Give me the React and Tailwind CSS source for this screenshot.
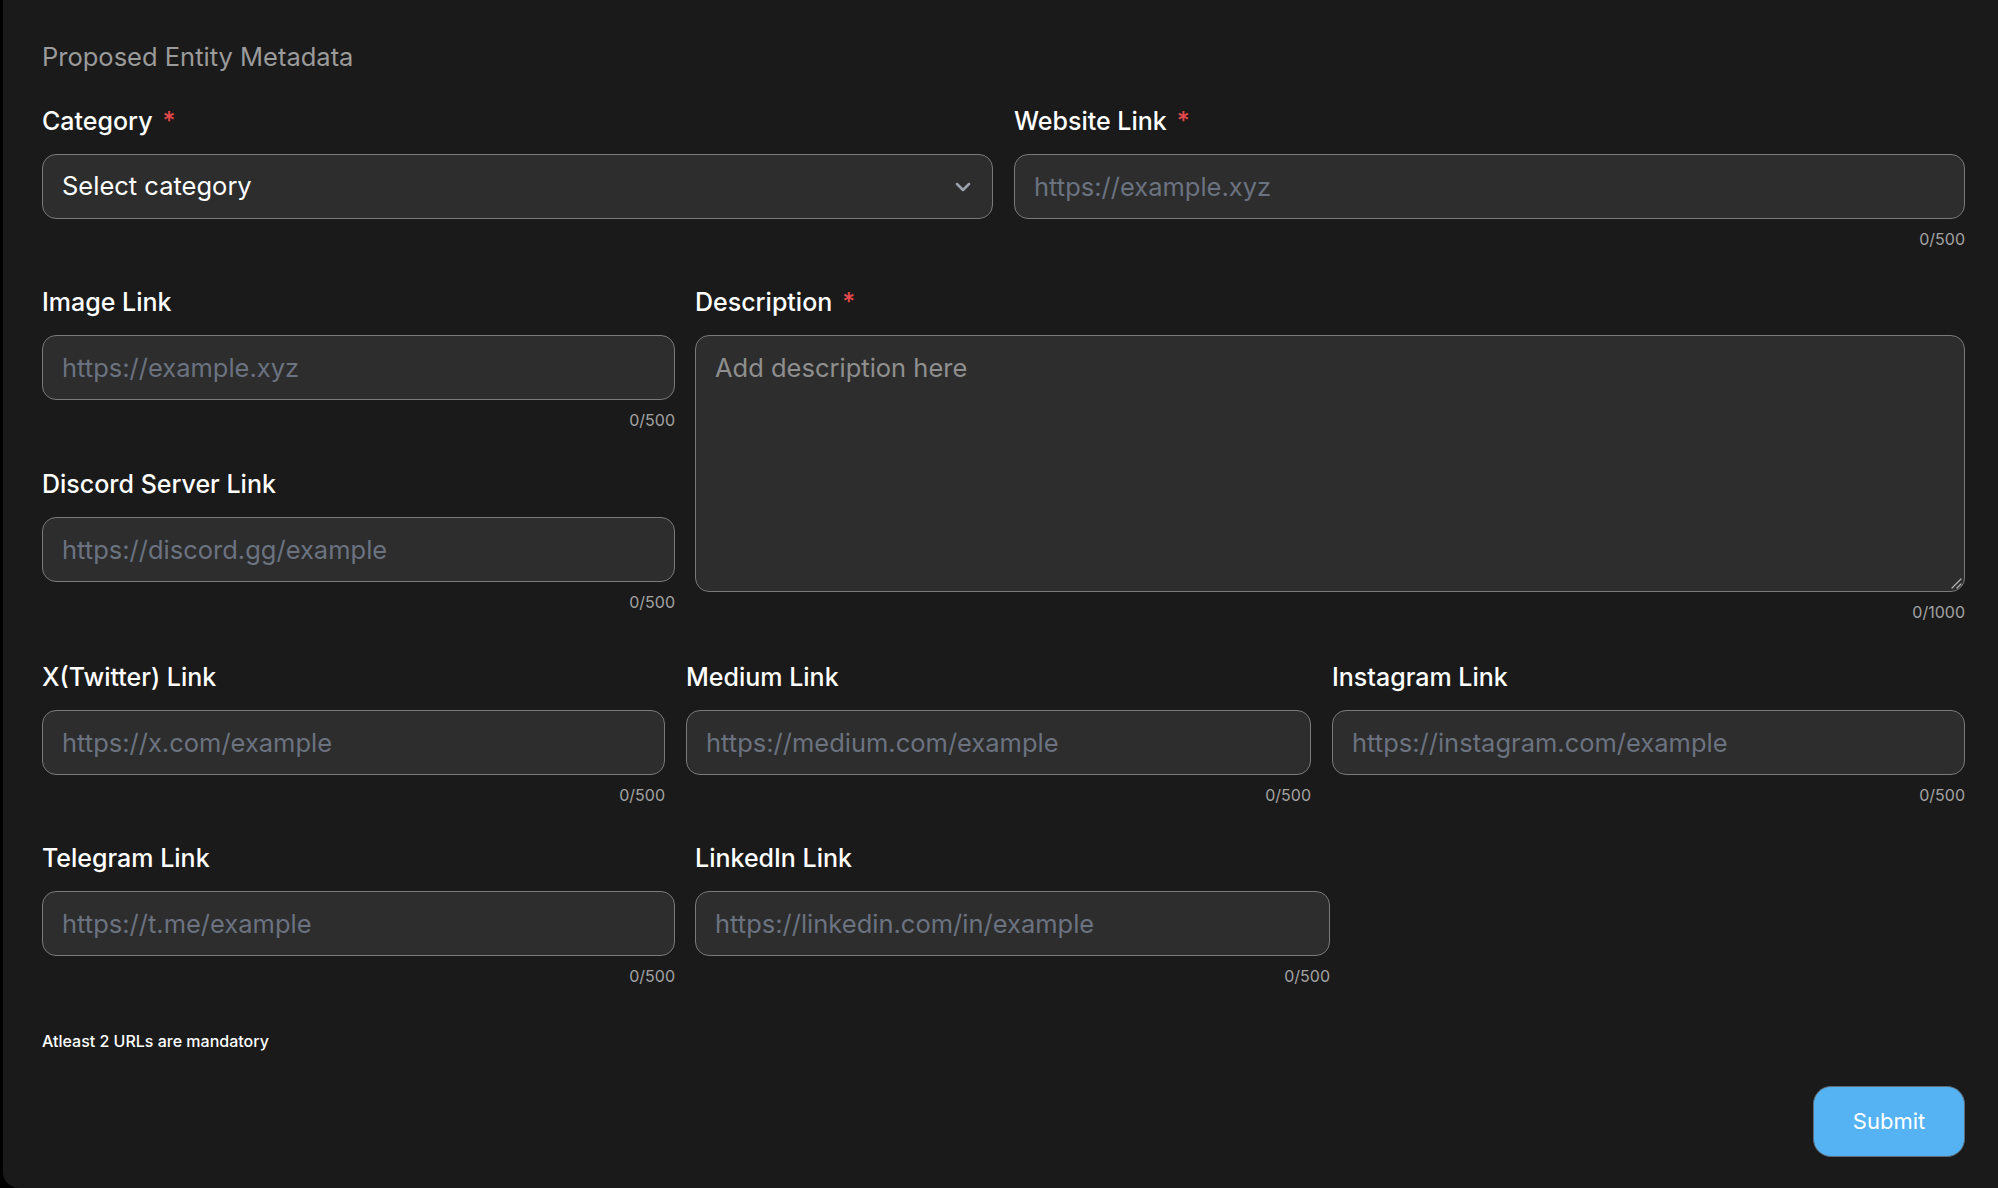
import React from 'react';
import { ChevronDown } from 'lucide-react';

const inputCls =
  'w-full h-[65px] rounded-[14px] border border-[#7a7a7a] bg-[#2d2d2d] px-[19px] text-[25.5px] text-white outline-none placeholder:text-[#6b7280]';

const Label = ({ children, required }) => (
  <label className="block text-[25px] leading-[32px] font-medium text-white mb-[17px]">
    {children}
    {required && <span className="ml-[10px] text-[#e5484d]">*</span>}
  </label>
);

const Counter = ({ max = 500 }) => (
  <div className="mt-[10px] text-right text-[16px] leading-[20px] text-[#a3a3a3]">0/{max}</div>
);

const Field = ({ label, placeholder, required }) => (
  <div>
    <Label required={required}>{label}</Label>
    <input type="text" placeholder={placeholder} className={inputCls} />
    <Counter />
  </div>
);

const App = () => {
  return (
    <div className="min-h-[1188px] bg-black pl-[3px] font-['Inter','Liberation_Sans',sans-serif]">
      <div className="min-h-[1188px] bg-[#1a1a1a] rounded-bl-[16px] pl-[39px] pr-[33px] pt-[41px]">
        <h2 className="text-[25.5px] leading-[32px] text-[#9b9b9b] mb-[32px]">Proposed Entity Metadata</h2>

        <div className="grid grid-cols-2 gap-x-[21px]">
          <div>
            <Label required>Category</Label>
            <div className="relative">
              <select className={inputCls + ' appearance-none'} defaultValue="">
                <option value="">Select category</option>
              </select>
              <ChevronDown
                size={24}
                strokeWidth={2.5}
                className="absolute right-[18px] top-1/2 -translate-y-1/2 text-[#9ca3af] pointer-events-none"
              />
            </div>
          </div>
          <Field label="Website Link" placeholder="https://example.xyz" required />
        </div>

        <div className="grid grid-cols-[633px_1fr] gap-x-5 mt-[37px]">
          <div className="flex flex-col gap-[38px]">
            <Field label="Image Link" placeholder="https://example.xyz" />
            <Field label="Discord Server Link" placeholder="https://discord.gg/example" />
          </div>
          <div>
            <Label required>Description</Label>
            <div className="relative">
              <textarea
                placeholder="Add description here"
                className="block w-full h-[257px] resize-none rounded-[14px] border border-[#7a7a7a] bg-[#2d2d2d] px-[19px] pt-[16px] text-[25.5px] leading-[32px] text-white outline-none placeholder:text-[#8f8f8f]"
              />
              {/* resize grip */}
              <svg
                width="12"
                height="12"
                viewBox="0 0 12 12"
                className="absolute right-[3px] bottom-[3px] pointer-events-none"
              >
                <path d="M11 2 L2 11 M11 7 L7 11" stroke="#b0b0b0" strokeWidth="1.3" strokeLinecap="round" />
              </svg>
            </div>
            <Counter max={1000} />
          </div>
        </div>

        <div className="grid grid-cols-[623px_625px_1fr] gap-x-[21px] mt-[39px]">
          <Field label="X(Twitter) Link" placeholder="https://x.com/example" />
          <Field label="Medium Link" placeholder="https://medium.com/example" />
          <Field label="Instagram Link" placeholder="https://instagram.com/example" />
        </div>

        <div className="grid grid-cols-[633px_635px_1fr] gap-x-5 mt-[37px]">
          <Field label="Telegram Link" placeholder="https://t.me/example" />
          <Field label="LinkedIn Link" placeholder="https://linkedin.com/in/example" />
        </div>

        <p className="mt-[45px] text-[16px] leading-[20px] font-medium text-white">Atleast 2 URLs are mandatory</p>

        <div className="flex justify-end mt-[35px]">
          <button className="w-[152px] h-[71px] rounded-[18px] border border-[#5f6b75] bg-[#55b3f4] text-[22px] text-white">
            Submit
          </button>
        </div>
      </div>
    </div>
  );
};

export default App;
